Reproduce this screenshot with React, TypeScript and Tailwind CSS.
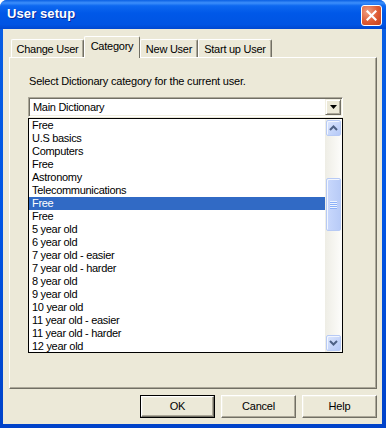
import { FC } from 'react';

const items = [
  'Free',
  'U.S basics',
  'Computers',
  'Free',
  'Astronomy',
  'Telecommunications',
  'Free',
  'Free',
  '5 year old',
  '6 year old',
  '7 year old - easier',
  '7 year old - harder',
  '8 year old',
  '9 year old',
  '10 year old',
  '11 year old - easier',
  '11 year old - harder',
  '12 year old',
];

const tabs = [
  { label: 'Change User', w: 'w-[73px]' },
  { label: 'Category', w: 'w-[56px]', active: true },
  { label: 'New User', w: 'w-[58px]' },
  { label: 'Start up User', w: 'w-[74px]' },
];

const ScrollButton: FC<{ down?: boolean }> = ({ down }) => (
  <div className="mx-[1px] h-[16px] w-[15px] rounded-[2px] border border-[#B7CAF5] bg-gradient-to-br from-[#DCE6FD] to-[#B5C9F7] flex items-center justify-center shadow-[inset_1px_1px_0_#F2F6FE]">
    <svg width="9" height="6" viewBox="0 0 9 6" className={down ? 'rotate-180' : ''}>
      <path d="M1 5 L4.5 1.5 L8 5" fill="none" stroke="#4D6185" strokeWidth="2" />
    </svg>
  </div>
);

const ClassicButton: FC<{ label: string; isDefault?: boolean }> = ({ label, isDefault }) => (
  <div className={`w-[75px] h-[23px] ${isDefault ? 'border border-black' : ''}`}>
    <div className="w-full h-full border border-t-white border-l-white border-r-[#716F64] border-b-[#716F64] shadow-[inset_-1px_-1px_0_#ACA899,inset_1px_1px_0_#F1EFE2] bg-[#ECE9D8] flex items-center justify-center text-[11px] text-black tracking-[-0.2px]">
      {label}
    </div>
  </div>
);

export default function App() {
  return (
    <div className="w-[386px] h-[428px] rounded-t-[7px] bg-gradient-to-b from-[#0A5FE3] via-[#0055E5] to-[#0042C9] flex flex-col overflow-hidden font-['Liberation_Sans',Arial,sans-serif]">
      {/* title bar */}
      <div className="h-[29px] flex items-center justify-between pl-[7px] pr-[4px] bg-[linear-gradient(to_bottom,#0A5FE3_0%,#3D8FFB_10%,#0D68F0_20%,#0058E8_45%,#0054E3_85%,#0047D0_100%)]">
        <span className="text-white font-bold text-[13px] tracking-[0.1px] [text-shadow:1px_1px_0_#0B2A9C] pb-[1px]">
          User setup
        </span>
        <div className="w-[21px] h-[21px] mt-[1px] rounded-[3px] border border-white bg-[radial-gradient(circle_at_30%_30%,#F0A083_0%,#DE5B33_55%,#C7411C_100%)] flex items-center justify-center">
          <svg width="11" height="11" viewBox="0 0 11 11">
            <path d="M1.5 1.5 L9.5 9.5 M9.5 1.5 L1.5 9.5" stroke="white" strokeWidth="2.2" strokeLinecap="square" />
          </svg>
        </div>
      </div>

      {/* body */}
      <div className="flex-1 mx-[3px] mb-[4px] mr-[4px] bg-[#ECE9D8] flex flex-col pt-[7px] pl-[6px] pr-[5px] text-black">
        {/* tab strip */}
        <div className="h-[21px] flex items-end pl-[2px] relative z-10">
          {tabs.map((t) =>
            t.active ? (
              <div
                key={t.label}
                className={`${t.w} h-[22px] -mb-[1px] bg-[#ECE9D8] border-l border-t border-r border-l-white border-t-white border-r-[#716F64] rounded-t-[2px] flex items-start justify-center pt-[3px] text-[11px] leading-[13px] tracking-[-0.25px]`}
              >
                {t.label}
              </div>
            ) : (
              <div
                key={t.label}
                className={`${t.w} h-[18px] bg-[#ECE9D8] border-l border-t border-r border-l-white border-t-white border-r-[#716F64] shadow-[inset_-1px_0_0_#ACA899] rounded-t-[2px] flex items-start justify-center pt-[3px] text-[11px] leading-[13px] tracking-[-0.25px]`}
              >
                {t.label}
              </div>
            )
          )}
        </div>

        {/* panel */}
        <div className="h-[332px] border border-t-white border-l-white border-r-[#716F64] border-b-[#716F64] shadow-[inset_-1px_-1px_0_#ACA899] pt-[17px] pl-[18px]">
          <div className="text-[11px] leading-[13px] tracking-[-0.2px] pl-[1px]">
            Select Dictionary category for the current user.
          </div>

          {/* combo */}
          <div className="mt-[9px] w-[315px] h-[20px] border border-t-[#ACA899] border-l-[#ACA899] border-r-white border-b-white shadow-[inset_1px_1px_0_#716F64,inset_-1px_-1px_0_#F1EFE2] bg-white flex items-center p-[1px]">
            <div className="flex-1 pl-[3px] text-[11px] leading-[13px] tracking-[-0.3px]">Main Dictionary</div>
            <div className="w-[16px] h-[16px] bg-[#ECE9D8] border border-t-[#F1EFE2] border-l-[#F1EFE2] border-r-[#716F64] border-b-[#716F64] shadow-[inset_1px_1px_0_white,inset_-1px_-1px_0_#ACA899] flex items-center justify-center">
              <svg width="7" height="4" viewBox="0 0 7 4">
                <path d="M0 0 H7 L3.5 4 Z" fill="black" />
              </svg>
            </div>
          </div>

          {/* list */}
          <div className="mt-[1px] w-[315px] h-[235px] border border-black bg-white flex overflow-hidden">
            <div className="w-[296px] flex flex-col">
              {items.map((it, i) => (
                <div
                  key={i}
                  className={`h-[13px] shrink-0 pl-[3px] text-[11px] leading-[13px] tracking-[-0.3px] ${
                    i === 6 ? 'bg-[#316AC5] text-white' : 'text-black'
                  }`}
                >
                  {it}
                </div>
              ))}
            </div>
            <div className="w-[17px] h-full bg-gradient-to-r from-[#EEEDE5] to-[#FDFDFB] flex flex-col py-[1px]">
              <ScrollButton />
              <div className="flex-1 relative">
                <div className="absolute left-[1px] top-[42px] w-[15px] h-[53px] rounded-[2px] border border-[#B7CAF5] bg-gradient-to-r from-[#C9D8FC] to-[#B8CBF7] shadow-[inset_1px_1px_0_#F2F6FE] flex flex-col items-center justify-center gap-[1px]">
                  {[0, 1, 2, 3].map((k) => (
                    <div key={k} className="w-[7px] h-[1px] bg-[#EEF4FE] shadow-[0_1px_0_#8CB0F8]" />
                  ))}
                </div>
              </div>
              <ScrollButton down />
            </div>
          </div>
        </div>

        {/* buttons */}
        <div className="mt-[6px] flex justify-end gap-[6px]">
          <ClassicButton label="OK" isDefault />
          <ClassicButton label="Cancel" />
          <ClassicButton label="Help" />
        </div>
      </div>
    </div>
  );
}
